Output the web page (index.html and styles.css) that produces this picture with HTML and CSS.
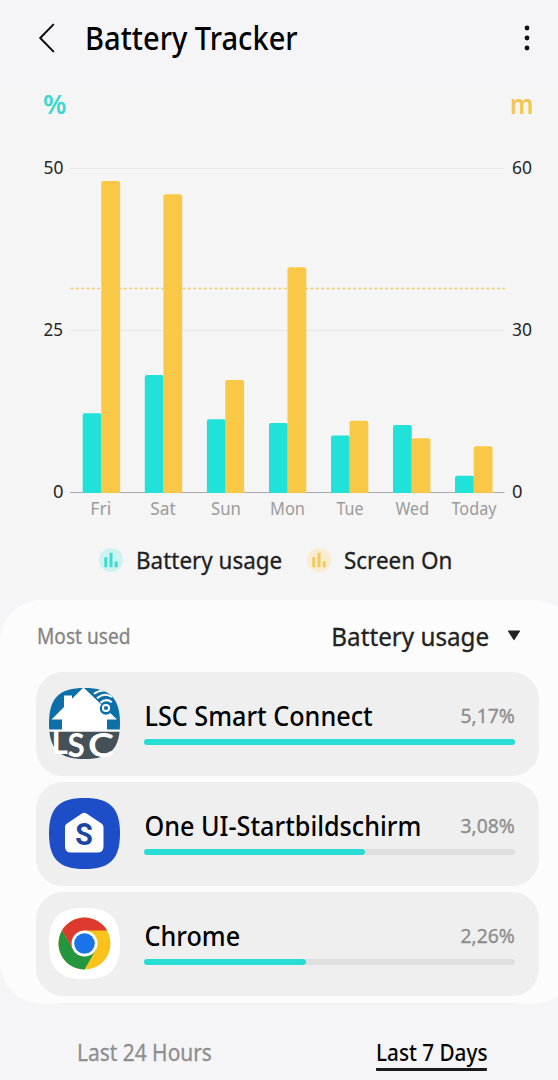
FILE: index.html
```html
<!DOCTYPE html>
<html lang="en">
<head>
<meta charset="utf-8">
<title>Battery Tracker</title>
<link rel="stylesheet" href="styles.css">
</head>
<body>
<div class="screen">
  <header class="header">
    <svg class="back" width="18" height="32" viewBox="0 0 18 32"><path d="M15.3 2.6 2.2 16l13.1 13.4" fill="none" stroke="#0a0a0a" stroke-width="2" stroke-linecap="round" stroke-linejoin="round"/></svg>
    <h1 class="title">Battery Tracker</h1>
    <svg class="more" width="6" height="28" viewBox="0 0 6 28"><circle cx="3" cy="4" r="2.4"/><circle cx="3" cy="14" r="2.4"/><circle cx="3" cy="24" r="2.4"/></svg>
  </header>
  <section class="usage">
    <svg class="chart" width="558" height="450" viewBox="0 80 558 450">
      <g class="unit">
        <text x="43" y="114" textLength="23.500" lengthAdjust="spacingAndGlyphs" fill="#3ed8cf">%</text>
        <text x="510" y="114" textLength="23.500" lengthAdjust="spacingAndGlyphs" fill="#f3c654">m</text>
      </g>
      <path d="M70 168.500H504M70 330.500H504" stroke="#e6e6e6"/>
      <path d="M70.500 288.500H505" stroke="#f2cf72" stroke-width="1.700" stroke-dasharray="3 2.330"/>
      <path d="M70 492.500H504.500" stroke="#a9a9a9"/>
      <g fill="#20e2d8">
        <path d="M82.700 493V415.300q0-2 2-2h14.800q2 0 2 2V493z"/>
        <path d="M144.800 493V377q0-2 2-2h14.800q2 0 2 2V493z"/>
        <path d="M206.900 493V421.300q0-2 2-2h14.800q2 0 2 2V493z"/>
        <path d="M269 493V425q0-2 2-2h14.800q2 0 2 2V493z"/>
        <path d="M331 493V437.500q0-2 2-2h14.800q2 0 2 2V493z"/>
        <path d="M393 493V427q0-2 2-2h14.800q2 0 2 2V493z"/>
        <path d="M455 493V477.800q0-2 2-2h14.800q2 0 2 2V493z"/>
      </g>
      <g fill="#f9c846">
        <path d="M101.300 493V183q0-2 2-2h14.800q2 0 2 2V493z"/>
        <path d="M163.400 493V196.300q0-2 2-2h14.800q2 0 2 2V493z"/>
        <path d="M225.300 493V382q0-2 2-2h14.800q2 0 2 2V493z"/>
        <path d="M287.500 493V269.200q0-2 2-2h14.800q2 0 2 2V493z"/>
        <path d="M349.500 493V422.700q0-2 2-2h14.800q2 0 2 2V493z"/>
        <path d="M411.600 493V440.200q0-2 2-2h14.800q2 0 2 2V493z"/>
        <path d="M473.700 493V448.200q0-2 2-2h14.800q2 0 2 2V493z"/>
      </g>
      <g class="axis">
        <text x="43.500" y="173.700" textLength="20" lengthAdjust="spacingAndGlyphs">50</text>
        <text x="43.500" y="335.700" textLength="19.500" lengthAdjust="spacingAndGlyphs">25</text>
        <text x="53" y="498" textLength="10.500" lengthAdjust="spacingAndGlyphs">0</text>
        <text x="512" y="173.700" textLength="20" lengthAdjust="spacingAndGlyphs">60</text>
        <text x="512" y="335.700" textLength="20" lengthAdjust="spacingAndGlyphs">30</text>
        <text x="512" y="498" textLength="10.500" lengthAdjust="spacingAndGlyphs">0</text>
      </g>
      <g class="days">
        <text x="90.300" y="515.300" textLength="21" lengthAdjust="spacingAndGlyphs">Fri</text>
        <text x="150.300" y="515.300" textLength="25.500" lengthAdjust="spacingAndGlyphs">Sat</text>
        <text x="211" y="515.300" textLength="30" lengthAdjust="spacingAndGlyphs">Sun</text>
        <text x="270" y="515.300" textLength="35" lengthAdjust="spacingAndGlyphs">Mon</text>
        <text x="336.500" y="515.300" textLength="27" lengthAdjust="spacingAndGlyphs">Tue</text>
        <text x="395.500" y="515.300" textLength="33.500" lengthAdjust="spacingAndGlyphs">Wed</text>
        <text x="451.500" y="515.300" textLength="45" lengthAdjust="spacingAndGlyphs">Today</text>
      </g>
    </svg>
    <div class="legend">
      <div class="legend-item">
        <svg width="24" height="24" viewBox="0 0 24 24"><circle cx="12" cy="12" r="12" fill="#cdf3f0"/><path d="M5.300 9.200h3V19.300h-3zM10.500 4.800h3V19.300h-3zM15.700 13.400h3v5.900h-3z" fill="#3edbd1"/></svg>
        <span class="legend-label">Battery usage</span>
      </div>
      <div class="legend-item">
        <svg width="24" height="24" viewBox="0 0 24 24"><circle cx="12" cy="12" r="12" fill="#faecd0"/><path d="M5.300 9.200h3V19.300h-3zM10.500 4.800h3V19.300h-3zM15.700 13.400h3v5.900h-3z" fill="#f0cb5c"/></svg>
        <span class="legend-label">Screen On</span>
      </div>
    </div>
  </section>
  <main class="panel">
    <div class="panel-head">
      <span class="most">Most used</span>
      <span class="sort">Battery usage</span>
      <svg class="caret" width="14" height="11" viewBox="0 0 14 11"><path d="M1.500 1h11L7 9.500z" fill="#222" stroke="#222" stroke-width="1.200" stroke-linejoin="round"/></svg>
    </div>
    <article class="card">
      <svg class="lsc-icon" width="71" height="71" viewBox="0 0 71 71">
        <defs><clipPath id="sq"><path d="M35.500 0C61 0 71 10 71 35.500S61 71 35.500 71 0 61 0 35.500 10 0 35.500 0z"/></clipPath></defs>
        <g clip-path="url(#sq)">
          <path fill="#0d6fa8" d="M0 0h71v42H0z"/>
          <path fill="#455159" d="M0 43.500h71V71H0z"/>
          <path fill="#fff" d="M34.500-.5 68 31.500h-10v10H13v-10H2.500L15 19V7.500h8v3.300zM0 41.500h71v2H0z"/>
          <circle cx="57" cy="20.500" r="6.200" fill="#0d6fa8"/>
          <circle cx="57" cy="20" r="3.100" fill="none" stroke="#fff" stroke-width="2"/>
          <path d="M51.500 14.800Q57 9.800 62.800 14.200M48 10.200Q55.500 3.800 63 9M45 5.800Q50 2 56 2.500" fill="none" stroke="#fff" stroke-width="2"/>
        </g>
        <text class="lsc"><tspan x="2.500" y="66.300">L</tspan><tspan x="18.500" y="68.500">S</tspan><tspan x="39" y="68.500" textLength="26" lengthAdjust="spacingAndGlyphs">C</tspan></text>
      </svg>
      <div class="info">
        <div class="line"><span class="name">LSC Smart Connect</span><span class="pct">5,17%</span></div>
        <div class="track"><div class="fill" style="width:100%"></div></div>
      </div>
    </article>
    <article class="card">
      <svg width="71" height="71" viewBox="0 0 71 71">
        <path fill="#1d4dc7" d="M35.500 0C61 0 71 10 71 35.500S61 71 35.500 71 0 61 0 35.500 10 0 35.500 0z"/>
        <path fill="#fff" d="M33.300 15.300q1.900-1.300 3.800 0L52.500 25.500q2 1.400 2 3.500V48.500q0 6-6 6H22q-6 0-6-6V29q0-2.100 2-3.500z"/>
        <text class="home-s" x="26.300" y="47" textLength="17.500" lengthAdjust="spacingAndGlyphs">S</text>
      </svg>
      <div class="info">
        <div class="line"><span class="name">One UI-Startbildschirm</span><span class="pct">3,08%</span></div>
        <div class="track"><div class="fill" style="width:59.500%"></div></div>
      </div>
    </article>
    <article class="card">
      <svg width="71" height="71" viewBox="0 0 71 71">
        <path fill="#fff" d="M35.500 0C61 0 71 10 71 35.500S61 71 35.500 71 0 61 0 35.500 10 0 35.500 0z"/>
        <circle cx="35.500" cy="35.500" r="26" fill="#f9c31c"/>
        <path fill="#dc3a2e" d="M12.984 22.500A26 26 0 0 1 58.016 22.500H35.500L24.242 42z"/>
        <path fill="#249640" d="M12.984 22.500A26 26 0 0 0 35.500 61.500L46.758 42 24.242 42z"/>
        <circle cx="35.500" cy="35.500" r="13" fill="#fff"/>
        <circle cx="35.500" cy="35.500" r="10.300" fill="#1a73e8"/>
      </svg>
      <div class="info">
        <div class="line"><span class="name">Chrome</span><span class="pct">2,26%</span></div>
        <div class="track"><div class="fill" style="width:43.700%"></div></div>
      </div>
    </article>
    <article class="card"></article>
  </main>
  <nav class="tabs">
    <span class="tab day-tab">Last 24 Hours</span>
    <span class="tab active"><span class="week-tab">Last 7 Days</span></span>
  </nav>
</div>
</body>
</html>
```
FILE: styles.css
```css
* { box-sizing: border-box; }
body { margin: 0; background: #f5f5f8; font-family: "Noto Sans", sans-serif; color: #000; }
svg { display: block; flex: none; }
span, h1 { white-space: nowrap; }
.screen { width: 558px; height: 1080px; overflow: hidden; display: flex; flex-direction: column; }
.header { height: 80px; flex: none; padding: 22px 28px 0 38px; display: flex; align-items: flex-start; }
.back { width: 18px; }
.title { margin: 0 auto 0 28.500px; font-size: 32.500px; line-height: 32px; font-weight: 500; transform: scaleX(.895); transform-origin: left; }
.more { margin: 2px 0 0; fill: #111; }
.usage { height: 520px; flex: none; background: linear-gradient(#f5f5f8, #f5f5f5 16px); }
.unit { font-size: 27px; font-weight: 600; }
.axis { font-size: 17.5px; fill: #252525; }
.days { font-size: 17.5px; fill: #9b9b9b; }
.legend { display: flex; padding: 18px 0 0 99px; }
.legend-item { display: flex; gap: 12.500px; width: 208px; height: 24px; align-items: center; }
.legend-label { font-size: 24px; line-height: 24px; color: #1f1f1f; -webkit-text-stroke: .3px; transform: scaleX(.935); transform-origin: left; }
.panel { width: 575px; height: 404px; flex: none; overflow: hidden; background: #fcfcfc; border-radius: 42px; padding: 0 36px; display: flex; flex-direction: column; gap: 6.2px; }
.panel-head { height: 65.800px; flex: none; display: flex; align-items: center; padding: 7px 18px 0 1px; }
.most { font-size: 21px; line-height: 24px; color: #858585; -webkit-text-stroke: .3px; transform: scaleX(.91); transform-origin: left; margin-right: auto; }
.sort { font-size: 25.500px; line-height: 26px; color: #222; -webkit-text-stroke: .3px; transform: scaleX(.95); transform-origin: right; }
.caret { margin: -2px 0 0 18px; }
.card { width: 503px; height: 104px; flex: none; border-radius: 27px; background: #efefef; display: flex; padding: 16px 24px 0 13px; gap: 24px; }
.info { flex: 1; display: flex; flex-direction: column; gap: 6px; padding-top: 11px; }
.line { height: 34px; display: flex; justify-content: space-between; align-items: center; }
.name { font-size: 26.500px; line-height: 34px; font-weight: 500; transform-origin: left; transform: translateX(.5px) scaleX(.95); }
.pct { font-size: 20px; line-height: 34px; color: #8d8d8d; -webkit-text-stroke: .3px; transform: translateX(-.5px) scaleX(.965); transform-origin: right; }
.track { height: 6px; border-radius: 3px; background: #dfdfdf; }
.fill { height: 6px; border-radius: 3px; background: #28ddd3; }
.lsc-icon { overflow: visible; }
.lsc { font: 700 31.5px Lato, sans-serif; fill: #fff; }
.home-s { font: 700 31px Roboto, sans-serif; fill: #1b459f; }
.tabs { height: 76px; flex: none; display: flex; justify-content: space-between; padding: 34px 71px 0 77px; }
.tab { font-size: 23px; line-height: 28px; color: #8e8e8e; height: 31px; }
.day-tab { -webkit-text-stroke: .3px; transform: scaleX(.91); transform-origin: left; }
.active { width: 111px; color: #050505; border-bottom: 3px solid #1b1b1f; border-radius: 1px; height: 32.500px; }
.week-tab { display: inline-block; font-weight: 500; transform: scaleX(.9); transform-origin: left; }
```
